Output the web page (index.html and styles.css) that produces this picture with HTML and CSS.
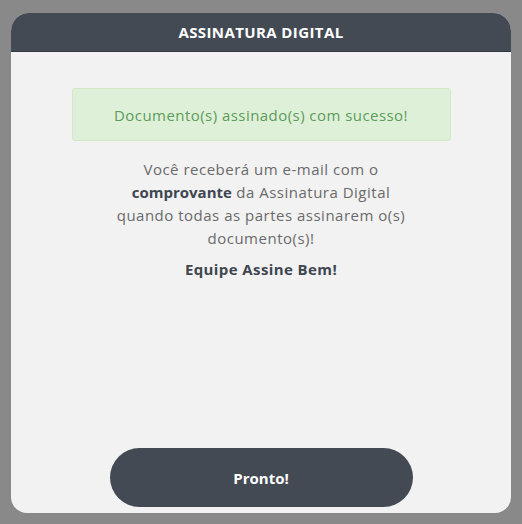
FILE: index.html
```html
<!DOCTYPE html>
<html lang="pt-BR">
<head>
<meta charset="utf-8">
<link rel="stylesheet" href="styles.css">
</head>
<body>
<div class="backdrop">
  <div class="modal">
    <div class="modal-header">ASSINATURA DIGITAL</div>
    <div class="modal-body">
      <div class="alert">Documento(s) assinado(s) com sucesso!</div>
      <p class="message">Você receberá um e-mail com o<br><strong>comprovante</strong> da Assinatura Digital<br>quando todas as partes assinarem o(s)<br>documento(s)!</p>
      <p class="signature">Equipe Assine Bem!</p>
      <div class="spacer"></div>
      <button class="btn">Pronto!</button>
    </div>
  </div>
</div>
</body>
</html>
```
FILE: styles.css
```css
html, body {
  margin: 0;
  padding: 0;
  background: #898989;
  font-family: "Open Sans", Lato, sans-serif;
}
.backdrop {
  width: 522px;
  height: 524px;
  padding: 13px 11px 11px;
  box-sizing: border-box;
}
.modal {
  width: 500px;
  height: 500px;
  background: #f2f2f2;
  border-radius: 18px 18px 16px 16px;
  overflow: hidden;
  display: flex;
  flex-direction: column;
}
.modal-header {
  height: 38px;
  background: #434a54;
  border-bottom: 1px solid #353a42;
  color: #fff;
  font-weight: 700;
  font-size: 15px;
  display: flex;
  align-items: center;
  justify-content: center;
  letter-spacing: 0.4px;
}
.modal-body {
  flex: 1;
  display: flex;
  flex-direction: column;
  align-items: center;
  padding: 36px 0 6px;
}
.alert {
  width: 379px;
  height: 53px;
  box-sizing: border-box;
  background: #dff0d8;
  border: 1px solid #d3e8c9;
  border-radius: 3px;
  color: #5b9c5b;
  font-size: 15px;
  display: flex;
  align-items: center;
  justify-content: center;
  letter-spacing: 0.45px;
}
.message {
  margin: 17px 0 0;
  text-align: center;
  font-size: 15px;
  line-height: 23px;
  color: #6a6a6a;
  letter-spacing: 0.5px;
}
.message strong {
  color: #3f4650;
  font-weight: 700;
  letter-spacing: 0;
}
.signature {
  margin: 8px 0 0;
  font-size: 15px;
  line-height: 23px;
  font-weight: 700;
  color: #3f4650;
  letter-spacing: 0.4px;
}
.spacer {
  flex: 1;
}
.btn {
  width: 303px;
  height: 59px;
  border: none;
  border-radius: 30px;
  background: #434a54;
  color: #fff;
  font-family: inherit;
  font-size: 15px;
  font-weight: 700;
  cursor: pointer;
}
```
